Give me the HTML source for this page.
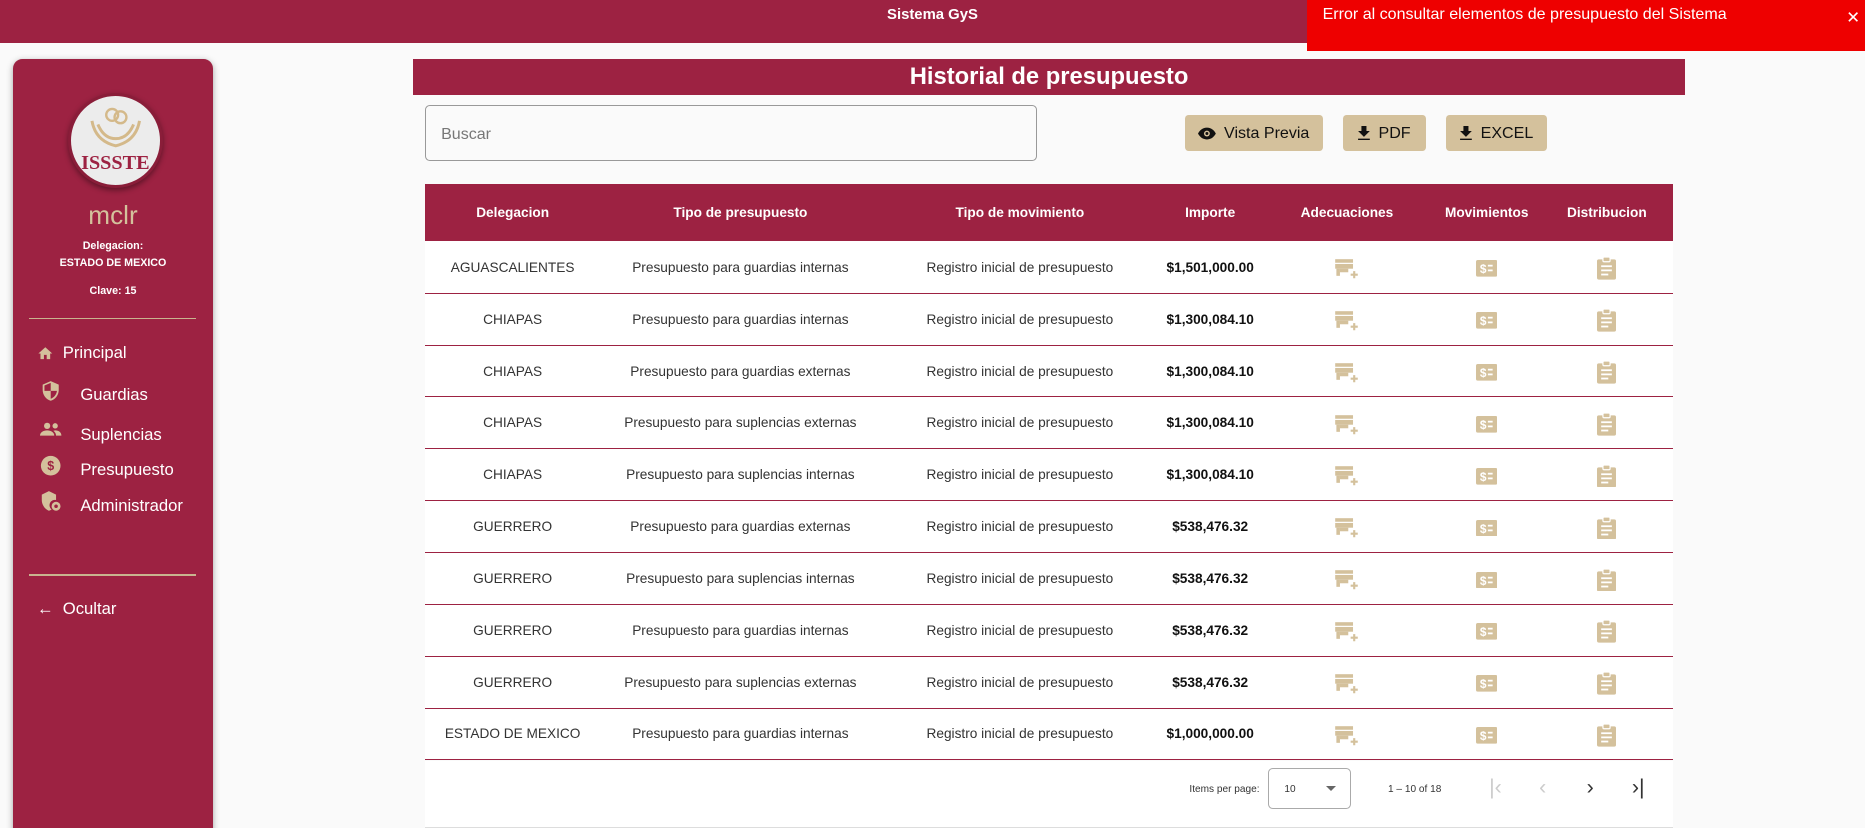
<!DOCTYPE html>
<html><head><meta charset="utf-8"><style>
*{box-sizing:border-box;margin:0;padding:0}
html,body{width:1865px;height:828px;overflow:hidden;background:#fafafa}
#w{zoom:1.1894;width:1568px;height:696px;position:relative;font-family:"Liberation Sans",Arial,sans-serif;color:#333}
.top{position:absolute;left:0;top:0;width:1568px;height:36px;background:#9d2242;color:#fff;font-weight:bold;font-size:12.5px;text-align:center;line-height:26px}
.toast{position:absolute;left:1099px;top:0;width:469px;height:43px;background:#ee0000;color:#fff;font-size:13.5px;padding:4px 13px}
.toast span{position:absolute;right:4px;top:7px;font-size:14px}
.side{position:absolute;left:11px;top:50px;width:168px;height:660px;background:#9d2242;border-radius:8px;box-shadow:0 2px 6px rgba(0,0,0,.35);color:#fff}
.logo{position:absolute;left:46px;top:28px;width:80px;height:80px;border-radius:50%;background:#ececec;border:3px solid #8a1d39;box-shadow:0 2px 5px rgba(0,0,0,.4);text-align:center}
.logo b{position:absolute;left:0;right:0;top:47px;font-family:"Liberation Serif",serif;color:#9d2242;font-size:17px}
.c{position:absolute;left:0;width:168px;text-align:center}
.hr{position:absolute;left:13px;width:141px;height:1px;background:#c9b48f}
.nav{position:absolute;left:20px;font-size:14px;display:flex;align-items:center}
.main{position:absolute;left:347px;top:50px;width:1070px;height:30px;background:#9d2242;color:#fff;font-weight:bold;font-size:20px;text-align:center;line-height:30px}
.search{position:absolute;left:357px;top:88px;width:515px;height:47px;border:1px solid #999;border-radius:4px;color:#777;font-size:13.5px;padding:16px 13px}
.btn{position:absolute;top:97px;height:30px;background:#d4c19c;border-radius:3px;font-size:13.5px;color:#111;display:flex;align-items:center;justify-content:center;gap:7px}
table{position:absolute;left:357px;top:155px;width:1050px;border-collapse:collapse;background:#fff}
th{background:#9d2242;color:#fff;font-size:11.5px;height:48px;font-weight:bold}
td{font-size:11.5px;height:43.6px;text-align:center;border-bottom:1px solid #9d2242;color:#333}
td.m{font-weight:bold;color:#111}
td svg{margin-top:5px}
.pg{position:absolute;left:357px;top:640px;width:1050px;height:56px;background:#fff;border-bottom:1px solid #ddd;font-size:8.5px;color:#333}
</style></head><body><div id="w">
<div class="top">Sistema GyS</div>
<div class="toast">Error al consultar elementos de presupuesto del Sistema<span>✕</span></div>
<div class="side">
 <div class="logo"><svg width="50" height="40" viewBox="0 0 50 40" style="margin-top:6px"><path d="M5 15 Q8 32 25 36 Q42 32 45 15 M10 18 Q15 30 25 30 Q35 30 40 18" stroke="#d4b98a" stroke-width="2.5" fill="none"/><circle cx="22" cy="10" r="5" fill="none" stroke="#d4b98a" stroke-width="2"/><circle cx="29" cy="12" r="5" fill="none" stroke="#d4b98a" stroke-width="2"/></svg><b>ISSSTE</b></div>
 <div class="c" style="top:118px;font-size:22px;color:#d4c19c">mclr</div>
 <div class="c" style="top:150px;font-size:9px;font-weight:bold;line-height:14px">Delegacion:<br>ESTADO DE MEXICO</div>
 <div class="c" style="top:190px;font-size:9px;font-weight:bold">Clave: 15</div>
 <div class="hr" style="top:217px"></div>
 <div class="nav" style="top:238px"><svg width="14" height="12" viewBox="0 0 24 20"><path d="M10 20v-6h4v6h5v-8h3L12 3 2 12h3v8z" fill="#d4c19c"/></svg>&nbsp;&nbsp;Principal</div>
 <div class="nav" style="top:274px;left:23px"><svg width="18" height="20" viewBox="0 0 24 24" style="margin-top:-8px"><path d="M12 1L3 5v6c0 5.5 3.8 10.7 9 12 5.2-1.3 9-6.5 9-12V5z" fill="#d4c19c"/><path d="M12 3v9H5V6zM12 12h7c-.5 4-3.3 7.6-7 8.8z" fill="#9d2242"/></svg>&nbsp;&nbsp;&nbsp;&nbsp;Guardias</div>
 <div class="nav" style="top:307px;left:23px"><svg width="18" height="14" viewBox="0 0 24 18" style="margin-top:-8px"><circle cx="8" cy="4" r="3.5" fill="#d4c19c"/><circle cx="17" cy="4" r="3" fill="#d4c19c"/><path d="M0 15c0-4 4-6 8-6s8 2 8 6zM17 9c4 0 7 2 7 6h-6c0-2-1-4-3-5.5z" fill="#d4c19c"/></svg>&nbsp;&nbsp;&nbsp;&nbsp;Suplencias</div>
 <div class="nav" style="top:337px;left:23px"><svg width="18" height="18" viewBox="0 0 24 24" style="margin-top:-8px"><circle cx="12" cy="12" r="11" fill="#d4c19c"/><text x="12" y="17" font-size="14" font-weight="bold" text-anchor="middle" fill="#9d2242" font-family="Liberation Sans">$</text></svg>&nbsp;&nbsp;&nbsp;&nbsp;Presupuesto</div>
 <div class="nav" style="top:367px;left:23px"><svg width="18" height="20" viewBox="0 0 24 24" style="margin-top:-8px"><path d="M10 1L2 5v6c0 5.5 3.8 10.7 8 12 1-.3 2-.7 3-1.4A6 6 0 0 1 18 11V5z" fill="#d4c19c"/><circle cx="18" cy="18" r="5" fill="#d4c19c"/><circle cx="18" cy="18" r="2" fill="#9d2242"/></svg>&nbsp;&nbsp;&nbsp;&nbsp;Administrador</div>
 <div class="hr" style="top:433px"></div>
 <div class="nav" style="top:454px">←&nbsp;&nbsp;Ocultar</div>
</div>
<div class="main">Historial de presupuesto</div>
<div class="search">Buscar</div>
<div class="btn" style="left:996px;width:116px"><svg width="15" height="11" viewBox="0 0 24 16"><path d="M12 0C6 0 2 4 0 8c2 4 6 8 12 8s10-4 12-8C22 4 18 0 12 0z" fill="#111"/><circle cx="12" cy="8" r="4" fill="#d4c19c"/><circle cx="12" cy="8" r="2" fill="#111"/></svg>Vista Previa</div>
<div class="btn" style="left:1129px;width:70px"><svg width="10" height="12" viewBox="0 0 14 17"><path d="M14 6h-4V0H4v6H0l7 7zM0 15v2h14v-2z" fill="#111"/></svg>PDF</div>
<div class="btn" style="left:1216px;width:85px"><svg width="10" height="12" viewBox="0 0 14 17"><path d="M14 6h-4V0H4v6H0l7 7zM0 15v2h14v-2z" fill="#111"/></svg>EXCEL</div>
<table>
<colgroup><col style="width:148px"><col style="width:235px"><col style="width:235px"><col style="width:85px"><col style="width:145px"><col style="width:90px"><col style="width:112px"></colgroup>
<tr><th>Delegacion</th><th>Tipo de presupuesto</th><th>Tipo de movimiento</th><th>Importe</th><th>Adecuaciones</th><th>Movimientos</th><th>Distribucion</th></tr>
<tbody id="tb"></tbody>
</table>
<div class="pg">
 <div style="position:absolute;left:643px;top:19px">Items per page:</div>
 <div style="position:absolute;left:709px;top:6px;width:70px;height:34px;border:1px solid #aaa;border-radius:4px"><span style="position:absolute;left:13px;top:12px">10</span><span style="position:absolute;left:48px;top:14px;border:5px solid transparent;border-top-color:#666"></span></div>
 <div style="position:absolute;left:810px;top:19px">1 – 10 of 18</div>
 <div style="position:absolute;left:895px;top:12px;font-size:18px;color:#ccc">|‹</div>
 <div style="position:absolute;left:937px;top:12px;font-size:18px;color:#ccc">‹</div>
 <div style="position:absolute;left:977px;top:12px;font-size:18px;color:#333">›</div>
 <div style="position:absolute;left:1015px;top:12px;font-size:18px;color:#333">›|</div>
</div>
</div>
<script>
var r=[["AGUASCALIENTES","Presupuesto para guardias internas","$1,501,000.00"],["CHIAPAS","Presupuesto para guardias internas","$1,300,084.10"],["CHIAPAS","Presupuesto para guardias externas","$1,300,084.10"],["CHIAPAS","Presupuesto para suplencias externas","$1,300,084.10"],["CHIAPAS","Presupuesto para suplencias internas","$1,300,084.10"],["GUERRERO","Presupuesto para guardias externas","$538,476.32"],["GUERRERO","Presupuesto para suplencias internas","$538,476.32"],["GUERRERO","Presupuesto para guardias internas","$538,476.32"],["GUERRERO","Presupuesto para suplencias externas","$538,476.32"],["ESTADO DE MEXICO","Presupuesto para guardias internas","$1,000,000.00"]];
var a='<svg width="22" height="18" viewBox="0 0 22 18"><rect x="1" y="1" width="15" height="3" fill="#d4c19c"/><rect x="1" y="5" width="15" height="4" fill="#d4c19c"/><rect x="2" y="9" width="3" height="6" fill="#d4c19c"/><rect x="5" y="9" width="7" height="3" fill="#d4c19c"/><path d="M17 11v6M14 14h6" stroke="#d4c19c" stroke-width="1.8"/></svg>';
var m='<svg width="18" height="14" viewBox="0 0 18 14"><rect x="0" y="0" width="18" height="14" rx="1.5" fill="#d4c19c"/><text x="6" y="11" font-size="10" font-weight="bold" fill="#fff" text-anchor="middle" font-family="Liberation Sans">$</text><rect x="10" y="4" width="4" height="1.5" fill="#fff"/><rect x="10" y="8" width="4" height="1.5" fill="#fff"/></svg>';
var d='<svg width="16" height="19" viewBox="0 0 16 19"><rect x="0" y="2" width="16" height="17" rx="1.5" fill="#d4c19c"/><rect x="5" y="0" width="6" height="4" rx="1" fill="#d4c19c" stroke="#fff" stroke-width="1"/><rect x="3.5" y="7" width="9" height="1.5" fill="#fff"/><rect x="3.5" y="10.5" width="9" height="1.5" fill="#fff"/><rect x="3.5" y="14" width="6" height="1.5" fill="#fff"/></svg>';
var h='';r.forEach(function(x){h+='<tr><td>'+x[0]+'</td><td>'+x[1]+'</td><td>Registro inicial de presupuesto</td><td class="m">'+x[2]+'</td><td>'+a+'</td><td>'+m+'</td><td>'+d+'</td></tr>'});
document.getElementById('tb').innerHTML=h;
</script>
</body></html>
